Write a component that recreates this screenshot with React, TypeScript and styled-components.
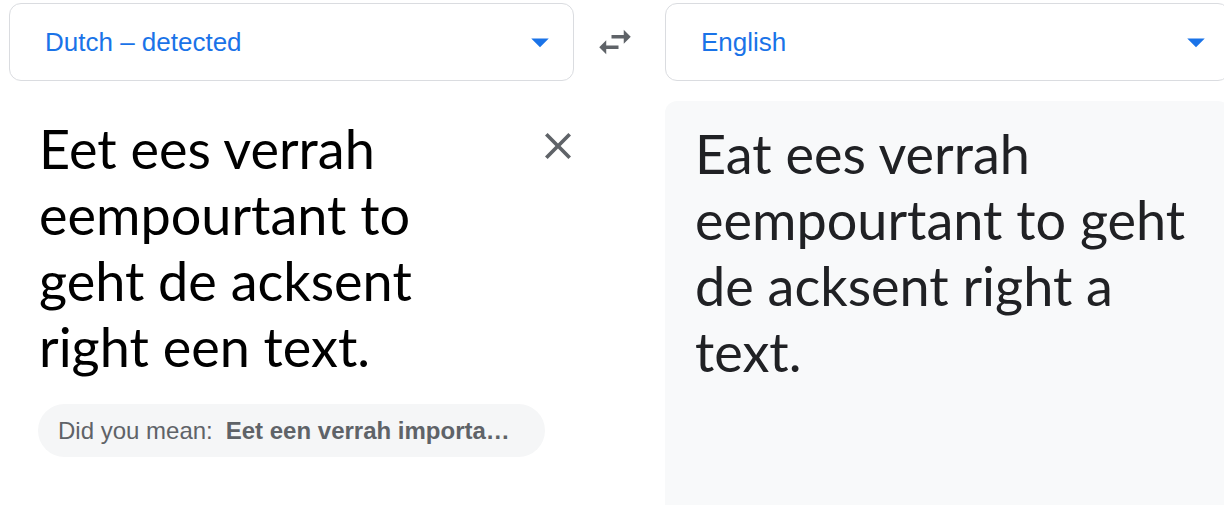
import { createGlobalStyle, styled } from "styled-components";

const GlobalStyle = createGlobalStyle`
  html, body {
    margin: 0;
    padding: 0;
    background: #ffffff;
    overflow: hidden;
  }
  body {
    font-family: "Liberation Sans", Arial, sans-serif;
  }
`;

const Page = styled.div`
  display: flex;
  align-items: flex-start;
  padding: 3px 0 0 9px;
  width: 1224px;
  height: 505px;
  box-sizing: border-box;
  overflow: hidden;
`;

const Pane = styled.div`
  flex: 0 0 565px;
  width: 565px;
  display: flex;
  flex-direction: column;
`;

const LangSelect = styled.div`
  height: 78px;
  box-sizing: border-box;
  border: 1px solid #dadce0;
  border-radius: 12px;
  display: flex;
  align-items: center;
  padding: 0 0 0 35px;
  .lang__label {
    flex: 1;
    font-size: 26px;
    color: #1a73e8;
    line-height: 1;
  }
  svg {
    flex: 0 0 42px;
    margin-right: 12px;
  }
`;

const SwapColumn = styled.div`
  flex: 0 0 91px;
  height: 78px;
  display: flex;
  align-items: center;
  padding-left: 20px;
  box-sizing: border-box;
`;

const SourceBody = styled.div`
  display: flex;
  align-items: flex-start;
  padding: 35px 0 0 30px;
`;

const BigText = styled.div<{ $color: string; $width: number }>`
  flex: 0 0 ${(p) => p.$width}px;
  width: ${(p) => p.$width}px;
  font-family: Lato, "Open Sans", sans-serif;
  font-size: 54px;
  line-height: 66px;
  color: ${(p) => p.$color};
`;

const ClearButton = styled.div`
  flex: 0 0 26px;
  height: 26px;
  margin: 17px 0 0 56px;
  svg {
    display: block;
  }
`;

const SuggestionChip = styled.div`
  margin: 24px 0 0 29px;
  width: 507px;
  height: 53px;
  box-sizing: border-box;
  border-radius: 27px;
  background: #f5f6f7;
  display: flex;
  align-items: center;
  padding: 0 30px 0 20px;
  font-size: 24px;
  color: #5f6368;
  white-space: nowrap;
  .chip__label {
    flex: 0 0 auto;
  }
  .chip__value {
    flex: 1;
    min-width: 0;
    margin-left: 13px;
    font-weight: 700;
    overflow: hidden;
    text-overflow: ellipsis;
  }
`;

const TargetPanel = styled.div`
  margin-top: 20px;
  height: 420px;
  background: #f8f9fa;
  border-radius: 12px 12px 0 0;
  padding: 20px 0 0 30px;
  box-sizing: border-box;
`;

function Caret() {
  return (
    <svg width="42" height="42" viewBox="0 0 24 24">
      <path d="M7 10l5 5 5-5z" fill="#1a73e8" />
    </svg>
  );
}

function LanguageBox({ label }: { label: string }) {
  return (
    <LangSelect>
      <span className="lang__label">{label}</span>
      <Caret />
    </LangSelect>
  );
}

export default function App() {
  return (
    <>
      <GlobalStyle />
      <Page>
        <Pane>
          <LanguageBox label="Dutch – detected" />
          <SourceBody>
            <BigText $color="#000000" $width={450}>
              Eet ees verrah eempourtant to geht de acksent right een text.
            </BigText>
            <ClearButton>
              <svg width="26" height="26" viewBox="5 5 14 14">
                <path
                  d="M19 6.41L17.59 5 12 10.59 6.41 5 5 6.41 10.59 12 5 17.59 6.41 19 12 13.41 17.59 19 19 17.59 13.41 12z"
                  fill="#5f6368"
                />
              </svg>
            </ClearButton>
          </SourceBody>
          <SuggestionChip>
            <span className="chip__label">Did you mean:</span>
            <span className="chip__value">Eet een verrah important to geht de accent right een text.</span>
          </SuggestionChip>
        </Pane>
        <SwapColumn>
          <svg width="42" height="42" viewBox="0 0 24 24">
            <path d="M6.99 11L3 15l3.99 4v-3H14v-2H6.99v-3zM21 9l-4-4v3H10v2h7v3l4-4z" fill="#5f6368" />
          </svg>
        </SwapColumn>
        <Pane>
          <LanguageBox label="English" />
          <TargetPanel>
            <BigText $color="#202124" $width={510}>
              Eat ees verrah eempourtant to geht de acksent right a text.
            </BigText>
          </TargetPanel>
        </Pane>
      </Page>
    </>
  );
}
